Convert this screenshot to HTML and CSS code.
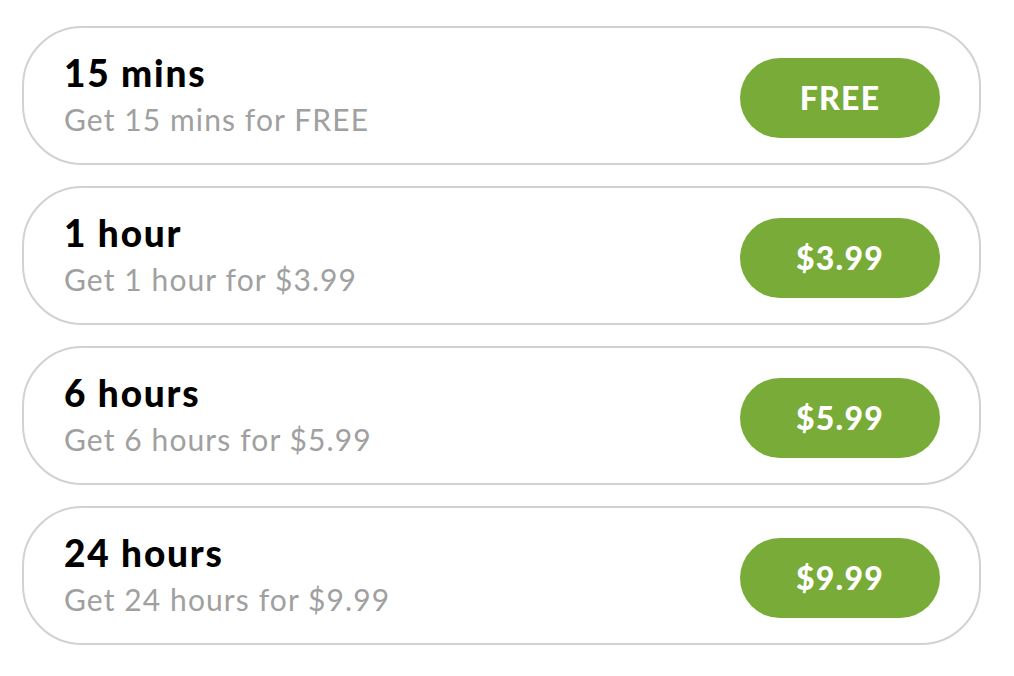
FILE: index.html
```html
<!DOCTYPE html>
<html>
<head>
<meta charset="utf-8">
<link rel="stylesheet" href="styles.css">
</head>
<body>
<div class="list">
  <div class="card">
    <div class="info">
      <div class="title">15 mins</div>
      <div class="sub">Get 15 mins for FREE</div>
    </div>
    <div class="btn">FREE</div>
  </div>
  <div class="card">
    <div class="info">
      <div class="title">1 hour</div>
      <div class="sub">Get 1 hour for $3.99</div>
    </div>
    <div class="btn">$3.99</div>
  </div>
  <div class="card">
    <div class="info">
      <div class="title">6 hours</div>
      <div class="sub">Get 6 hours for $5.99</div>
    </div>
    <div class="btn">$5.99</div>
  </div>
  <div class="card">
    <div class="info">
      <div class="title">24 hours</div>
      <div class="sub">Get 24 hours for $9.99</div>
    </div>
    <div class="btn">$9.99</div>
  </div>
</div>
</body>
</html>
```
FILE: styles.css
```css
html, body {
  margin: 0;
  padding: 0;
  background: #fff;
}
body {
  font-family: Lato, "Open Sans", sans-serif;
}
.list {
  display: flex;
  flex-direction: column;
  gap: 21px;
  padding: 26px 33px 0 22px;
}
.card {
  box-sizing: border-box;
  height: 139px;
  border: 2px solid #d2d2d2;
  border-radius: 60px;
  display: flex;
  align-items: center;
  justify-content: space-between;
  padding: 0 39px 0 40px;
}
.info {
  display: flex;
  flex-direction: column;
}
.title {
  font-size: 37px;
  font-weight: 900;
  letter-spacing: 1.8px;
  color: #000;
  line-height: 46px;
}
.sub {
  font-size: 30px;
  letter-spacing: 1.1px;
  color: #a0a0a0;
  line-height: 46px;
}
.btn {
  width: 200px;
  height: 80px;
  border-radius: 40px;
  background: #78ab37;
  color: #fff;
  font-size: 32px;
  font-weight: 900;
  letter-spacing: 1.2px;
  display: flex;
  align-items: center;
  justify-content: center;
  margin-top: 4px;
}
```
